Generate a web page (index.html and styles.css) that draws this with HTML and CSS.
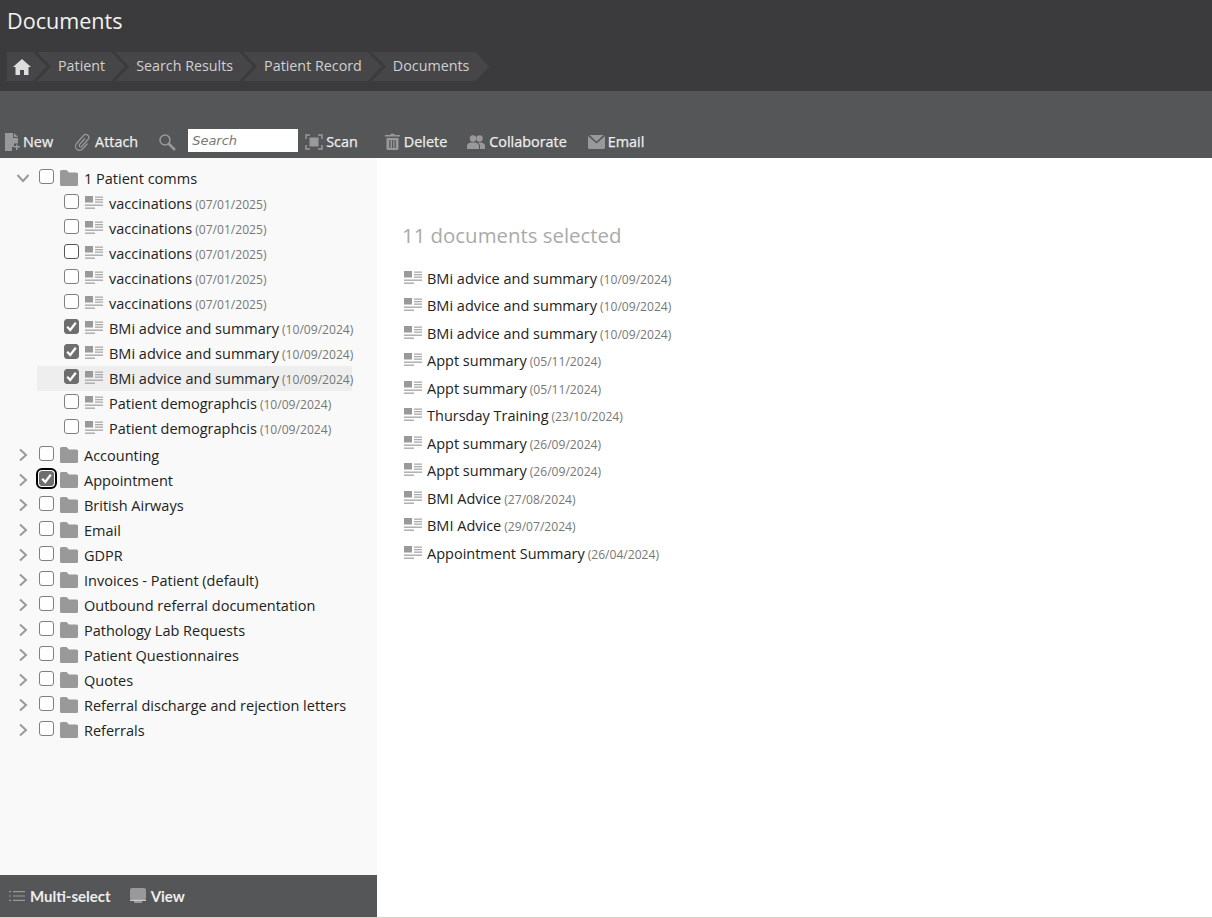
FILE: index.html
```html
<!DOCTYPE html>
<html lang="en">
<head>
<meta charset="utf-8">
<title>Documents</title>
<link rel="stylesheet" href="styles.css">
</head>
<body>
<svg class="defs" width="0" height="0" aria-hidden="true">
  <symbol id="doc" viewBox="0 0 18 14">
    <rect x="0" y="0" width="8" height="6.500" fill="#999"/>
    <rect x="10" y="0.5" width="8" height="1.3"/><rect x="10" y="3" width="8" height="1.3"/><rect x="10" y="5.5" width="8" height="1.3"/>
    <rect x="0" y="8.500" width="18" height="1.4"/><rect x="0" y="11.500" width="10" height="1.4"/>
  </symbol>
  <symbol id="folder" viewBox="0 0 18 16">
    <path d="M1.5 0H6.5L9 2.5H16.5A1.5 1.5 0 0 1 18 4V14.5A1.5 1.5 0 0 1 16.5 16H1.5A1.5 1.5 0 0 1 0 14.5V1.5A1.5 1.5 0 0 1 1.5 0Z"/>
  </symbol>
  <symbol id="tick" viewBox="0 0 15 15">
    <path d="M3.2 7.8 6.2 11 11.8 3.8" fill="none" stroke="#fff" stroke-width="2.2"/>
  </symbol>
  <symbol id="right" viewBox="0 0 12 14">
    <path d="M3 1.5 9 7 3 12.5" fill="none" stroke="#999" stroke-width="2"/>
  </symbol>
  <symbol id="down" viewBox="0 0 14 12">
    <path d="M1.5 3 7 9 12.5 3" fill="none" stroke="#999" stroke-width="2"/>
  </symbol>
</svg>

<header class="header">
  <h1 class="title">Documents</h1>
  <nav class="crumbs">
    <a class="crumb crumb-home"><svg class="home" viewBox="0 0 18 16"><path d="M9 0 18 8H15.5V16H11V11H7V16H2.500V8H0Z" fill="#ddd"/></svg></a>
    <a class="crumb">Patient</a>
    <a class="crumb">Search Results</a>
    <a class="crumb">Patient Record</a>
    <a class="crumb">Documents</a>
  </nav>
</header>

<div class="toolbar">
  <a class="tool tool-new"><svg class="ti" viewBox="0 0 16 18"><path d="M1 0H9V5H14V10.500L10 10.500V14H8V18H1ZM10 0 14 4H10ZM4 7H11V8.200H4ZM4 10H8V11.200H4ZM10 13H12V11.500H13.500V13H16V14.500H13.500V17H12V14.500H10Z" fill="#999"/></svg>New</a>
  <a class="tool tool-attach"><svg class="ti" viewBox="0 0 16 18"><path d="M11 5.500 5.500 11.500A1.500 1.500 0 0 0 7.800 13.500L14 6.500A3 3 0 0 0 9.500 2.500L2.500 10.500A4 4 0 0 0 8.500 16L13.500 10.500" fill="none" stroke="#999" stroke-width="1.200"/></svg>Attach</a>
  <a class="tool tool-search"><svg class="ti ti-search" viewBox="0 0 18 18"><circle cx="7" cy="7" r="5" fill="none" stroke="#999" stroke-width="1.500"/><path d="M10.500 10.500 17 17" stroke="#999" stroke-width="2.500"/></svg></a>
  <input class="search" type="text" placeholder="Search">
  <a class="tool tool-scan"><svg class="ti ti-scan" viewBox="0 0 18 16"><path d="M1 5V1H5M13 1H17V5M17 11V15H13M5 15H1V11" fill="none" stroke="#999" stroke-width="1.500"/><rect x="4.500" y="3.500" width="9" height="9" fill="#999"/></svg>Scan</a>
  <a class="tool tool-delete"><svg class="ti ti-delete" viewBox="0 0 15 17"><path d="M5.500 2V.8H9.500V2H15V3.500H0V2ZM1.500 5H13.500V15.500A1.500 1.500 0 0 1 12 17H3A1.500 1.500 0 0 1 1.500 15.500ZM4.200 7V15H5.500V7ZM6.900 7V15H8.200V7ZM9.500 7V15H10.800V7Z" fill="#999" fill-rule="evenodd"/></svg>Delete</a>
  <a class="tool tool-collab"><svg class="ti ti-collab" viewBox="0 0 18 14"><circle cx="6" cy="3.500" r="3.200" fill="#999"/><circle cx="12.500" cy="3.500" r="3.200" fill="#999"/><path d="M0 14V11Q0 8 4 7.500H8Q12 8 12 11V14ZM13 14V11Q13 9 11 7.500H14Q18 8 18 11V14Z" fill="#999"/></svg>Collaborate</a>
  <a class="tool tool-email"><svg class="ti ti-email" viewBox="0 0 17 14"><path d="M1.500 0H15.500L8.500 6.500ZM0 1 8.500 8.500 17 1V12.500A1.500 1.500 0 0 1 15.500 14H1.500A1.500 1.500 0 0 1 0 12.500Z" fill="#999"/></svg>Email</a>
</div>

<div class="main">
  <aside class="side">
    <div class="tree">
      <div class="row"><svg class="arrow arrow-down"><use href="#down"/></svg><span class="cb"></span><svg class="folder"><use href="#folder"/></svg><span class="name">1 Patient comms</span></div>
      <div class="children">
        <div class="row child"><span class="cb"></span><svg class="doc"><use href="#doc"/></svg><span class="name">vaccinations</span><span class="date">(07/01/2025)</span></div>
        <div class="row child"><span class="cb"></span><svg class="doc"><use href="#doc"/></svg><span class="name">vaccinations</span><span class="date">(07/01/2025)</span></div>
        <div class="row child"><span class="cb cb-dark"></span><svg class="doc"><use href="#doc"/></svg><span class="name">vaccinations</span><span class="date">(07/01/2025)</span></div>
        <div class="row child"><span class="cb"></span><svg class="doc"><use href="#doc"/></svg><span class="name">vaccinations</span><span class="date">(07/01/2025)</span></div>
        <div class="row child"><span class="cb"></span><svg class="doc"><use href="#doc"/></svg><span class="name">vaccinations</span><span class="date">(07/01/2025)</span></div>
        <div class="row child"><span class="cb on"><svg><use href="#tick"/></svg></span><svg class="doc"><use href="#doc"/></svg><span class="name">BMi advice and summary</span><span class="date">(10/09/2024)</span></div>
        <div class="row child"><span class="cb on"><svg><use href="#tick"/></svg></span><svg class="doc"><use href="#doc"/></svg><span class="name">BMi advice and summary</span><span class="date">(10/09/2024)</span></div>
        <div class="row child active"><span class="cb on"><svg><use href="#tick"/></svg></span><svg class="doc"><use href="#doc"/></svg><span class="name">BMi advice and summary</span><span class="date">(10/09/2024)</span></div>
        <div class="row child"><span class="cb"></span><svg class="doc"><use href="#doc"/></svg><span class="name">Patient demographcis</span><span class="date">(10/09/2024)</span></div>
        <div class="row child"><span class="cb"></span><svg class="doc"><use href="#doc"/></svg><span class="name">Patient demographcis</span><span class="date">(10/09/2024)</span></div>
      </div>
      <div class="row"><svg class="arrow"><use href="#right"/></svg><span class="cb"></span><svg class="folder"><use href="#folder"/></svg><span class="name">Accounting</span></div>
      <div class="row"><svg class="arrow"><use href="#right"/></svg><span class="cb on focus"><svg><use href="#tick"/></svg></span><svg class="folder"><use href="#folder"/></svg><span class="name">Appointment</span></div>
      <div class="row"><svg class="arrow"><use href="#right"/></svg><span class="cb"></span><svg class="folder"><use href="#folder"/></svg><span class="name">British Airways</span></div>
      <div class="row"><svg class="arrow"><use href="#right"/></svg><span class="cb"></span><svg class="folder"><use href="#folder"/></svg><span class="name">Email</span></div>
      <div class="row"><svg class="arrow"><use href="#right"/></svg><span class="cb"></span><svg class="folder"><use href="#folder"/></svg><span class="name">GDPR</span></div>
      <div class="row"><svg class="arrow"><use href="#right"/></svg><span class="cb"></span><svg class="folder"><use href="#folder"/></svg><span class="name">Invoices - Patient (default)</span></div>
      <div class="row"><svg class="arrow"><use href="#right"/></svg><span class="cb"></span><svg class="folder"><use href="#folder"/></svg><span class="name">Outbound referral documentation</span></div>
      <div class="row"><svg class="arrow"><use href="#right"/></svg><span class="cb"></span><svg class="folder"><use href="#folder"/></svg><span class="name">Pathology Lab Requests</span></div>
      <div class="row"><svg class="arrow"><use href="#right"/></svg><span class="cb"></span><svg class="folder"><use href="#folder"/></svg><span class="name">Patient Questionnaires</span></div>
      <div class="row"><svg class="arrow"><use href="#right"/></svg><span class="cb"></span><svg class="folder"><use href="#folder"/></svg><span class="name">Quotes</span></div>
      <div class="row"><svg class="arrow"><use href="#right"/></svg><span class="cb"></span><svg class="folder"><use href="#folder"/></svg><span class="name">Referral discharge and rejection letters</span></div>
      <div class="row"><svg class="arrow"><use href="#right"/></svg><span class="cb"></span><svg class="folder"><use href="#folder"/></svg><span class="name">Referrals</span></div>
    </div>
    <div class="sidebar-foot">
      <a class="foot-item"><svg class="fi" viewBox="0 0 16 12"><path d="M0 1H2V2.200H0ZM4 1H16V2.200H4ZM0 5.400H2V6.600H0ZM4 5.400H16V6.600H4ZM0 9.800H2V11H0ZM4 9.800H16V11H4Z" fill="#999"/></svg>Multi-select</a>
      <a class="foot-item foot-view"><svg class="fi" viewBox="0 0 16 16"><rect x="0" y="0" width="16" height="11.500" rx="2" fill="#999"/><rect x="0" y="11.500" width="16" height="1.500" fill="#ccc"/><path d="M4 13H12V15H4Z" fill="#999"/></svg>View</a>
    </div>
  </aside>
  <section class="content">
    <h2 class="count">11 documents selected</h2>
    <ul class="list">
      <li class="item"><svg class="doc"><use href="#doc"/></svg><span class="name">BMi advice and summary</span><span class="date">(10/09/2024)</span></li>
      <li class="item"><svg class="doc"><use href="#doc"/></svg><span class="name">BMi advice and summary</span><span class="date">(10/09/2024)</span></li>
      <li class="item"><svg class="doc"><use href="#doc"/></svg><span class="name">BMi advice and summary</span><span class="date">(10/09/2024)</span></li>
      <li class="item"><svg class="doc"><use href="#doc"/></svg><span class="name">Appt summary</span><span class="date">(05/11/2024)</span></li>
      <li class="item"><svg class="doc"><use href="#doc"/></svg><span class="name">Appt summary</span><span class="date">(05/11/2024)</span></li>
      <li class="item"><svg class="doc"><use href="#doc"/></svg><span class="name">Thursday Training</span><span class="date">(23/10/2024)</span></li>
      <li class="item"><svg class="doc"><use href="#doc"/></svg><span class="name">Appt summary</span><span class="date">(26/09/2024)</span></li>
      <li class="item"><svg class="doc"><use href="#doc"/></svg><span class="name">Appt summary</span><span class="date">(26/09/2024)</span></li>
      <li class="item"><svg class="doc"><use href="#doc"/></svg><span class="name">BMI Advice</span><span class="date">(27/08/2024)</span></li>
      <li class="item"><svg class="doc"><use href="#doc"/></svg><span class="name">BMI Advice</span><span class="date">(29/07/2024)</span></li>
      <li class="item"><svg class="doc"><use href="#doc"/></svg><span class="name">Appointment Summary</span><span class="date">(26/04/2024)</span></li>
    </ul>
  </section>
</div>
</body>
</html>
```

FILE: styles.css
```css
* { box-sizing: border-box; }
html, body { height: 100%; }
body {
  margin: 0;
  height: 918px;
  overflow: hidden;
  display: flex;
  flex-direction: column;
  background: #fff;
  color: #222;
  font-family: "Open Sans", "Noto Sans", sans-serif;
  font-size: 14px;
}
.defs { position: absolute; }

.header { height: 91px; background: #3b3b3d; padding: 7px 7px 0; flex: none; }
.title { margin: 0; height: 45px; font-size: 21.6px; line-height: 28px; font-weight: 400; color: #f2f2f2; }
.crumbs { display: flex; height: 29px; }
.crumb {
  display: flex;
  align-items: center;
  height: 29px;
  margin-right: -10px;
  padding: 0 20px 2px 21px;
  background: #464648;
  color: #d0d0d0;
  font-size: 14.3px;
  clip-path: polygon(0 0, calc(100% - 14px) 0, 100% 50%, calc(100% - 14px) 100%, 0 100%, 14px 50%);
}
.crumb-home { padding: 0 16px 0 6px; clip-path: polygon(0 0, calc(100% - 14px) 0, 100% 50%, calc(100% - 14px) 100%, 0 100%); }
.home { width: 18px; height: 16px; }

.toolbar {
  height: 67px;
  flex: none;
  background: #555658;
  display: flex;
  align-items: flex-end;
  padding: 0 0 6px 4px;
}
.tool {
  display: flex;
  align-items: center;
  height: 23px;
  padding-top: 2px;
  color: #eee;
  font-size: 14.4px;
  font-weight: 500;
  -webkit-text-stroke: 0.25px #eee;
}
.ti { width: 16px; height: 18px; margin-right: 3px; flex: none; }
.tool-attach { margin-left: 21px; }
.tool-attach .ti { margin-right: 5px; }
.tool-search { margin-left: 20px; }
.ti-search { width: 18px; margin-right: 0; }
.search {
  width: 110px;
  height: 23px;
  margin-left: 12px;
  border: 0;
  padding: 0 4px;
  background: #fff;
  font-family: "DejaVu Sans", sans-serif;
  font-style: italic;
  font-size: 13px;
}
.search::placeholder { color: #777; }
.tool-scan { margin-left: 7px; }
.ti-scan { width: 18px; height: 16px; }
.tool-delete { margin-left: 27px; }
.ti-delete { width: 15px; height: 17px; margin-right: 4px; }
.tool-collab { margin-left: 20px; }
.ti-collab { width: 18px; height: 14px; margin-right: 4px; }
.tool-email { margin-left: 21px; }
.ti-email { width: 17px; height: 14px; margin-right: 3px; }

.main { flex: 1; display: flex; min-height: 0; border-bottom: 1px solid #d6d2c4; }
.side { width: 377px; flex: none; display: flex; flex-direction: column; background: #f9f9f9; }
.tree { flex: 1; padding-top: 8px; }
.row {
  position: relative;
  display: flex;
  align-items: center;
  height: 25px;
  padding-left: 39px;
}
.children { padding-bottom: 2px; }
.child { padding-left: 27px; margin-left: 37px; margin-right: 25px; }
.active { background: #eee; }
.arrow { position: absolute; left: 17px; top: 5px; width: 12px; height: 14px; }
.arrow-down { width: 14px; height: 12px; left: 16px; top: 6px; }
.cb {
  width: 15px;
  height: 15px;
  flex: none;
  border: 1.5px solid #808080;
  border-radius: 3px;
  background: #fff;
  margin-top: -4px;
  position: relative;
}
.cb-dark { border-color: #555; }
.cb.on { background: #6e6e6e; border-color: #6e6e6e; }
.cb svg { position: absolute; left: -1.500px; top: -1.500px; width: 15px; height: 15px; }
.focus { outline: 2px solid #000; outline-offset: 1px; }
.folder { width: 18px; height: 16px; margin: -1px 6px 0; fill: #999; flex: none; }
.doc { width: 18px; height: 14px; margin-left: 6px; margin-right: 6px; margin-top: -2px; fill: #aaa; flex: none; }
.name { color: #222; font-size: 14.5px; white-space: nowrap; }
.date { margin-left: 3px; color: #777; font-size: 12.1px; padding-top: 2px; white-space: nowrap; }

.sidebar-foot {
  height: 42px;
  flex: none;
  background: #555658;
  display: flex;
  align-items: center;
  padding-left: 9px;
}
.foot-item { display: flex; align-items: center; color: #eee; font-family: "Lato", sans-serif; font-size: 15px; font-weight: 700; }
.fi { width: 16px; height: 16px; margin-right: 5px; }
.foot-view { margin-left: 19px; }

.content { flex: 1; padding: 62px 0 0 25px; }
.count { margin: 0 0 14.500px; font-size: 20.4px; line-height: 30px; font-weight: 400; color: #aaa; }
.list { list-style: none; margin: 0; padding: 0; }
.item { display: flex; align-items: center; height: 27.5px; padding-left: 2px; }
.item .doc { margin-left: 0; margin-right: 5px; margin-top: -1px; }
```
